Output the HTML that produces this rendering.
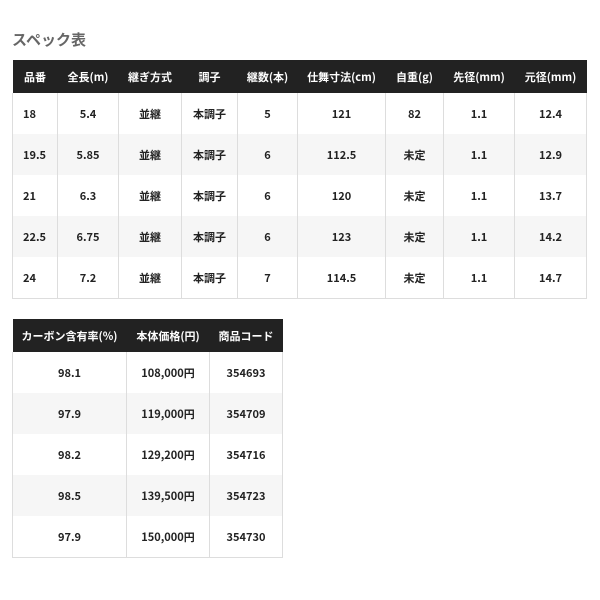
<!DOCTYPE html><html><head><meta charset="utf-8"><style>
body{margin:0;background:#fff;font-family:"Noto Sans CJK JP","Liberation Sans",sans-serif;}
h2{position:absolute;left:12px;top:29px;margin:0;font-size:15px;line-height:22px;color:#666;font-weight:bold;}
table{position:absolute;border-collapse:collapse;font-size:11px;font-weight:bold;color:#222;line-height:14px;}
th{background:#222;color:#fff;height:33px;padding:0;font-weight:bold;}
td{height:41px;padding:0;text-align:center;vertical-align:middle;border-left:1px solid #ddd;border-right:1px solid #ddd;background:#fff;}
tr:nth-child(odd) td{background:#f6f6f6;}
tr:last-child td{border-bottom:1px solid #ddd;}
td.l{text-align:left;padding-left:10px;}
</style></head><body>
<h2>スペック表</h2>
<table style="left:12px;top:60px;width:575px">
<tr><th style="width:45px">品番</th><th style="width:61px">全長(m)</th><th style="width:63px">継ぎ方式</th><th style="width:56px">調子</th><th style="width:60px">継数(本)</th><th style="width:88px">仕舞寸法(cm)</th><th style="width:58px">自重(g)</th><th style="width:71px">先径(mm)</th><th>元径(mm)</th></tr>
<tr><td class="l">18</td><td>5.4</td><td>並継</td><td>本調子</td><td>5</td><td>121</td><td>82</td><td>1.1</td><td>12.4</td></tr>
<tr><td class="l">19.5</td><td>5.85</td><td>並継</td><td>本調子</td><td>6</td><td>112.5</td><td>未定</td><td>1.1</td><td>12.9</td></tr>
<tr><td class="l">21</td><td>6.3</td><td>並継</td><td>本調子</td><td>6</td><td>120</td><td>未定</td><td>1.1</td><td>13.7</td></tr>
<tr><td class="l">22.5</td><td>6.75</td><td>並継</td><td>本調子</td><td>6</td><td>123</td><td>未定</td><td>1.1</td><td>14.2</td></tr>
<tr><td class="l">24</td><td>7.2</td><td>並継</td><td>本調子</td><td>7</td><td>114.5</td><td>未定</td><td>1.1</td><td>14.7</td></tr>
</table>
<table style="left:12px;top:319px;width:271px">
<tr><th style="width:114px">カーボン含有率(%)</th><th style="width:83px">本体価格(円)</th><th>商品コード</th></tr>
<tr><td>98.1</td><td>108,000円</td><td>354693</td></tr>
<tr><td>97.9</td><td>119,000円</td><td>354709</td></tr>
<tr><td>98.2</td><td>129,200円</td><td>354716</td></tr>
<tr><td>98.5</td><td>139,500円</td><td>354723</td></tr>
<tr><td>97.9</td><td>150,000円</td><td>354730</td></tr>
</table>
</body></html>
